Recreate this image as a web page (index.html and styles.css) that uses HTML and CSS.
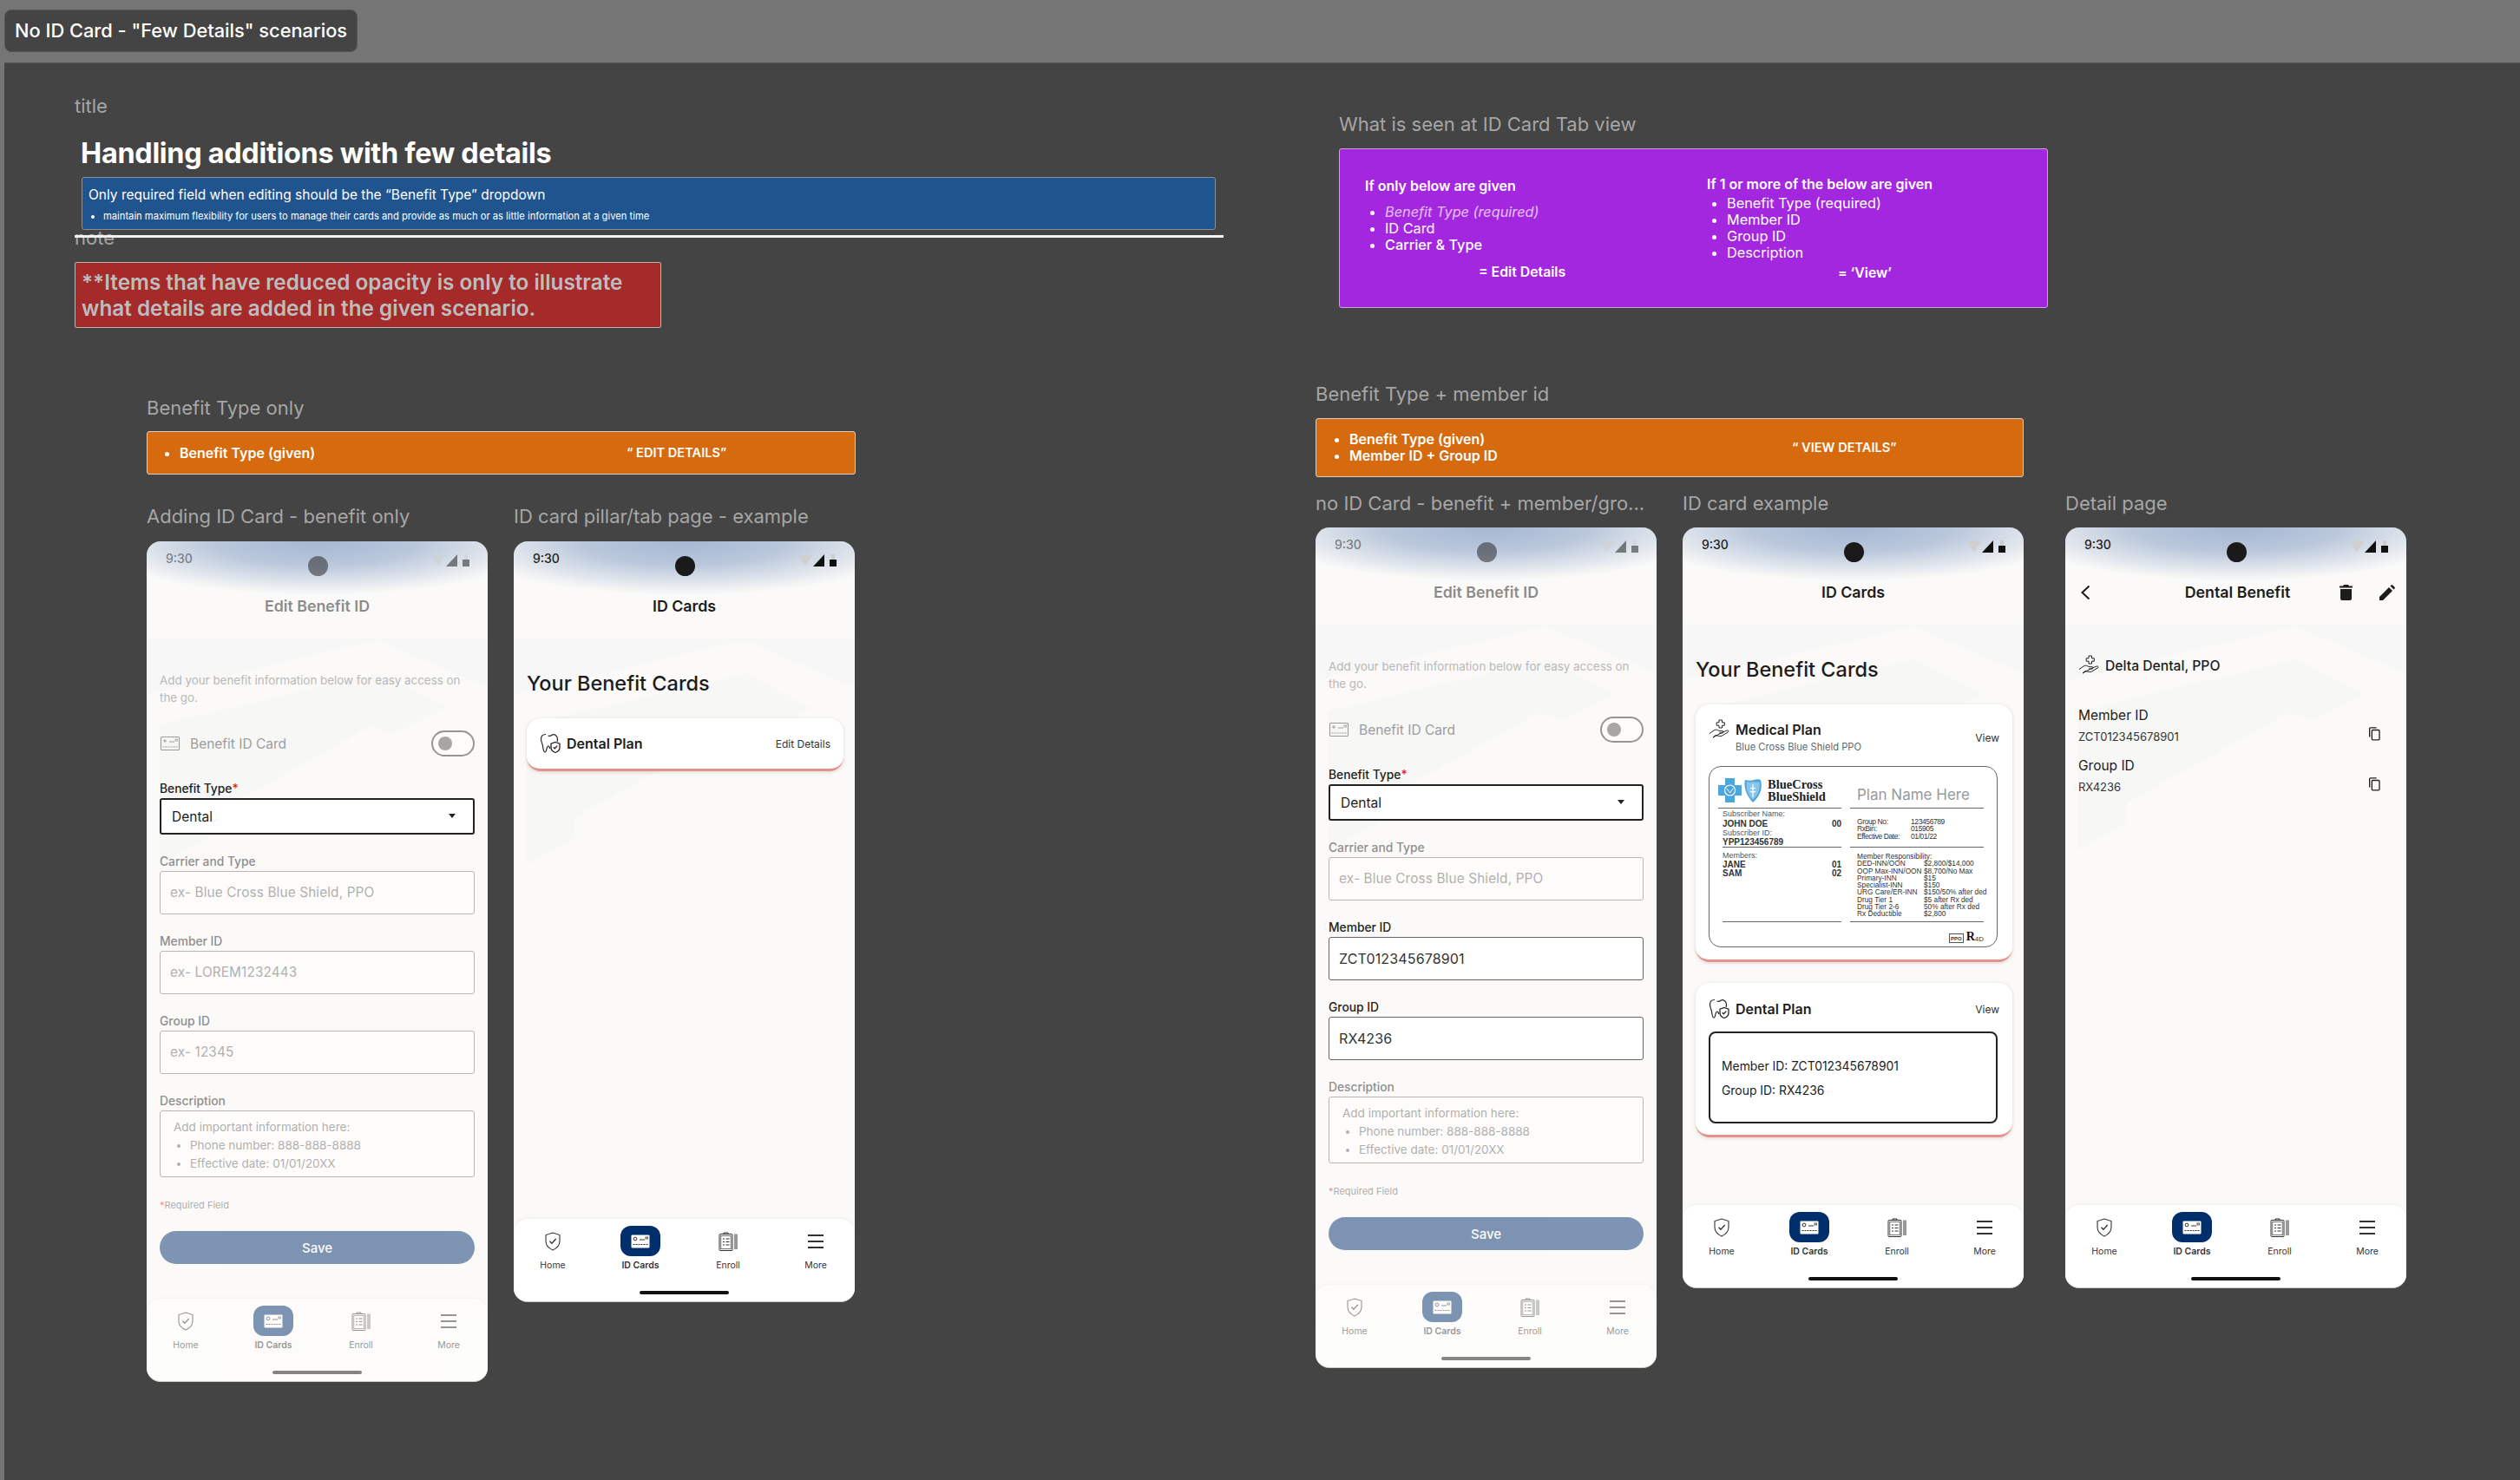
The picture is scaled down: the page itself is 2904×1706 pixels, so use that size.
FILE: index.html
```html
<!DOCTYPE html>
<html lang="en">
<head>
  <meta charset="UTF-8">
  <title>No ID Card - Few Details scenarios</title>
  <link rel="stylesheet" href="styles.css">
</head>
<body>
  <!-- shared icons -->
  <svg class="icon-defs" aria-hidden="true">
    <symbol id="i-shield" viewBox="0 0 24 24"><path d="M12 2l8 2.6v7c0 4.800-3.200 8.300-8 10.400-4.800-2.100-8-5.600-8-10.400v-7z" fill="none" stroke="currentColor" stroke-width="1.100"/><path d="M8.500 11.800l2.400 2.500 4.800-5.300" fill="none" stroke="currentColor" stroke-width="1.300"/></symbol>
    <symbol id="i-card" viewBox="0 0 24 24"><rect x="1.500" y="4.500" width="21" height="15" rx="1" fill="none" stroke="currentColor" stroke-width="1.100"/><path d="M6 7v4M4 9h4M11 10h6" fill="none" stroke="currentColor" stroke-width="1"/><path d="M3.500 16h17" fill="none" stroke="currentColor" stroke-width="1" stroke-dasharray="2 1"/><rect x="18" y="7" width="2.500" height="2" fill="none" stroke="currentColor" stroke-width=".8"/></symbol>
    <symbol id="i-card-on" viewBox="0 0 24 24"><rect x="1.500" y="4.500" width="21" height="15" rx="1" fill="#fff"/><circle cx="6" cy="9" r="1.900" fill="none" stroke="#333" stroke-width="1"/><path d="M11 10h6" fill="none" stroke="#333" stroke-width="1"/><path d="M3.500 15.500h17" fill="none" stroke="#333" stroke-width="1" stroke-dasharray="2 1"/><rect x="18" y="7" width="2.500" height="2" fill="none" stroke="#333" stroke-width=".8"/></symbol>
    <symbol id="i-clipboard" viewBox="0 0 24 24"><rect x="2" y="3.500" width="15" height="19" rx="1" fill="none" stroke="currentColor" stroke-width="1"/><rect x="3.800" y="5.300" width="11.400" height="15.400" fill="none" stroke="currentColor" stroke-width=".7"/><path d="M7 3.500V2h5v1.500M6 9h2M6 12.500h2M6 16h2M9.500 9h4M9.500 12.500h4M9.500 16h4" fill="none" stroke="currentColor" stroke-width="1"/><path d="M20 3.500v17.500M22 3.500v17.500" fill="none" stroke="currentColor" stroke-width="1"/></symbol>
    <symbol id="i-menu" viewBox="0 0 24 24"><path d="M3 5h18M3 12h18M3 19h18" fill="none" stroke="currentColor" stroke-width="1.800"/></symbol>
    <symbol id="i-tooth" viewBox="0 0 24 24"><path d="M7 1.500c-3.200 0-5.500 2-5.500 5.500 0 3.300 1.500 4.600 2 8 .4 2.900.8 7 2.500 7 2.400 0 1.400-7 3.800-7 1 0 1.600 1.400 2 3M9.500 3c1.300.5 3 .5 4.500-.8 2.600-1.400 6.500.3 6.500 4.800 0 1.200-.2 2.200-.5 3" fill="none" stroke="currentColor" stroke-width="1.200"/><path d="M18 10.500l5 1.700v4.300c0 2.900-2 4.900-5 6-3-1.100-5-3.100-5-6v-4.300z" fill="#fff" stroke="currentColor" stroke-width="1.300"/><path d="M15.700 16.200l1.600 1.600 3-3.200" fill="none" stroke="currentColor" stroke-width="1.300"/></symbol>
    <symbol id="i-hand" viewBox="0 0 24 24"><path d="M12 1h3.500v2.800h2.800v3.400h-2.800V10H12V7.200H9.200V3.800H12z" fill="none" stroke="currentColor" stroke-width="1"/><path d="M1 16.500l5-3.500c1.500-1 3-1 4.500-.3l2.500 1h3c1.300 0 1.300 2.300 0 2.300h-4M16 15l5.300-2c1.500-.5 2.200 1.200 1 2l-6.800 4c-1 .6-2 .7-3 .5l-4.500-1-3 2.500z" fill="none" stroke="currentColor" stroke-width="1"/></symbol>
    <symbol id="i-copy" viewBox="0 0 24 24"><path d="M4 18V3.500C4 2.700 4.700 2 5.500 2H16" fill="none" stroke="currentColor" stroke-width="2"/><rect x="8" y="6" width="13" height="17" rx="1.500" fill="none" stroke="currentColor" stroke-width="2"/></symbol>
    <symbol id="i-status" viewBox="0 0 44 14"><path d="M0 2c4-3 12-3 16 0l-8 11z" fill="#cfcfcf"/><path d="M30 0v14H17z" fill="#111"/><rect x="38" y="0" width="4" height="6" fill="#ccc"/><rect x="36" y="6" width="8" height="8" fill="#111"/></symbol>
    <symbol id="i-pattern" viewBox="0 0 393 440" preserveAspectRatio="xMidYMin slice"><polygon points="0,0 393,0 393,58 265,3 0,66" fill="#f7f7f7"/><polygon points="15,100 267,41 345,81 285,111 257,103 71,207 71,230 15,261" fill="#f7f7f6"/></symbol>
  </svg>

  <div class="topbar">
    <div class="section-tag">No ID Card - "Few Details" scenarios</div>
  </div>

  <div class="canvas">

    <!-- note -->
    <div class="note-block">
      <div class="frame-label">note</div>
      <div class="note-box">**Items that have reduced opacity is only to illustrate<br>what details are added in the given scenario.</div>
    </div>

    <!-- title -->
    <div class="title-block">
      <div class="frame-label title-label">title</div>
      <h1 class="page-title">Handling additions with few details</h1>
      <div class="info-box">
        <p>Only required field when editing should be the “Benefit Type” dropdown</p>
        <ul><li>maintain maximum flexibility for users to manage their cards and provide as much or as little information at a given time</li></ul>
      </div>
      <div class="title-rule"></div>
    </div>

    <!-- what is seen -->
    <div class="seen-block">
      <div class="frame-label seen-label">What is seen at ID Card Tab view</div>
      <div class="seen-box">
        <div class="seen-col seen-left">
          <h4>If only below are given</h4>
          <ul>
            <li><em>Benefit Type (required)</em></li>
            <li>ID Card</li>
            <li><b>Carrier &amp; Type</b></li>
          </ul>
          <div class="seen-result">= Edit Details</div>
        </div>
        <div class="seen-col seen-right">
          <h4>If 1 or more of the below are given</h4>
          <ul>
            <li>Benefit Type (required)</li>
            <li>Member ID</li>
            <li>Group ID</li>
            <li>Description</li>
          </ul>
          <div class="seen-result">= ‘View’</div>
        </div>
      </div>
    </div>

    <!-- 시나리오 1 -->
    <div class="scenario scenario-one">
      <div class="frame-label">Benefit Type only</div>
      <div class="banner">
        <ul><li>Benefit Type (given)</li></ul>
        <div class="banner-result">“ EDIT DETAILS”</div>
      </div>
      <div class="phones">
        <div class="phone-col">
          <div class="frame-label">Adding ID Card - benefit only</div>
          <div class="phone phone-tall">
            <svg class="phone-pattern"><use href="#i-pattern"/></svg>
            <div class="phone-top">
              <div class="status-bar faded">
                <span class="status-time">9:30</span>
                <span class="camera"></span>
                <span class="status-icons"><svg width="44" height="14"><use href="#i-status"/></svg></span>
              </div>
              <div class="phone-title faded">Edit Benefit ID</div>
            </div>
            <div class="phone-body form-body">
              <p class="form-intro faded">Add your benefit information below for easy access on the go.</p>
              <div class="toggle-row faded">
                <svg class="row-icon"><use href="#i-card"/></svg>
                <span>Benefit ID Card</span>
                <span class="toggle"></span>
              </div>
              <label class="field-label">Benefit Type<i>*</i></label>
              <div class="select-box">Dental<span class="caret"></span></div>
              <div class="field faded">
                <label class="field-label">Carrier and Type</label>
                <div class="input-box">ex- Blue Cross Blue Shield, PPO</div>
              </div>
              <div class="field faded">
                <label class="field-label">Member ID</label>
                <div class="input-box">ex- LOREM1232443</div>
              </div>
              <div class="field faded">
                <label class="field-label">Group ID</label>
                <div class="input-box">ex- 12345</div>
              </div>
              <div class="field faded">
                <label class="field-label">Description</label>
                <div class="text-box">
                  Add important information here:
                  <ul><li>Phone number: 888-888-8888</li><li>Effective date: 01/01/20XX</li></ul>
                </div>
              </div>
              <div class="required-note faded"><i>*</i>Required Field</div>
              <div class="save-btn faded">Save</div>
            </div>
            <nav class="tabbar faded">
              <div class="tabs">
                <div class="tab"><span class="tab-icon"><svg><use href="#i-shield"/></svg></span>Home</div>
                <div class="tab tab-on"><span class="tab-icon"><svg><use href="#i-card-on"/></svg></span>ID Cards</div>
                <div class="tab"><span class="tab-icon"><svg><use href="#i-clipboard"/></svg></span>Enroll</div>
                <div class="tab"><span class="tab-icon"><svg><use href="#i-menu"/></svg></span>More</div>
              </div>
              <div class="home-bar"></div>
            </nav>
          </div>
        </div>

        <div class="phone-col">
          <div class="frame-label">ID card pillar/tab page - example</div>
          <div class="phone">
            <svg class="phone-pattern"><use href="#i-pattern"/></svg>
            <div class="phone-top">
              <div class="status-bar">
                <span class="status-time">9:30</span>
                <span class="camera"></span>
                <span class="status-icons"><svg width="44" height="14"><use href="#i-status"/></svg></span>
              </div>
              <div class="phone-title">ID Cards</div>
            </div>
            <div class="phone-body cards-body">
              <h2 class="cards-heading">Your Benefit Cards</h2>
              <div class="plan-card plan-short">
                <div class="plan-head">
                  <svg class="plan-icon"><use href="#i-tooth"/></svg>
                  <span class="plan-name">Dental Plan</span>
                  <span class="plan-link">Edit Details</span>
                </div>
              </div>
            </div>
            <nav class="tabbar">
              <div class="tabs">
                <div class="tab"><span class="tab-icon"><svg><use href="#i-shield"/></svg></span>Home</div>
                <div class="tab tab-on"><span class="tab-icon"><svg><use href="#i-card-on"/></svg></span>ID Cards</div>
                <div class="tab"><span class="tab-icon"><svg><use href="#i-clipboard"/></svg></span>Enroll</div>
                <div class="tab"><span class="tab-icon"><svg><use href="#i-menu"/></svg></span>More</div>
              </div>
              <div class="home-bar"></div>
            </nav>
          </div>
        </div>
      </div>
    </div>

    <!-- 시나리오 2 -->
    <div class="scenario scenario-two">
      <div class="frame-label">Benefit Type + member id</div>
      <div class="banner banner-tall">
        <ul><li>Benefit Type (given)</li><li>Member ID + Group ID</li></ul>
        <div class="banner-result">“ VIEW DETAILS”</div>
      </div>
      <div class="phones">
        <div class="phone-col">
          <div class="frame-label">no ID Card - benefit + member/gro...</div>
          <div class="phone phone-tall">
            <svg class="phone-pattern"><use href="#i-pattern"/></svg>
            <div class="phone-top">
              <div class="status-bar faded">
                <span class="status-time">9:30</span>
                <span class="camera"></span>
                <span class="status-icons"><svg width="44" height="14"><use href="#i-status"/></svg></span>
              </div>
              <div class="phone-title faded">Edit Benefit ID</div>
            </div>
            <div class="phone-body form-body">
              <p class="form-intro faded">Add your benefit information below for easy access on the go.</p>
              <div class="toggle-row faded">
                <svg class="row-icon"><use href="#i-card"/></svg>
                <span>Benefit ID Card</span>
                <span class="toggle"></span>
              </div>
              <label class="field-label">Benefit Type<i>*</i></label>
              <div class="select-box">Dental<span class="caret"></span></div>
              <div class="field faded">
                <label class="field-label">Carrier and Type</label>
                <div class="input-box">ex- Blue Cross Blue Shield, PPO</div>
              </div>
              <div class="field">
                <label class="field-label">Member ID</label>
                <div class="input-box input-filled">ZCT012345678901</div>
              </div>
              <div class="field">
                <label class="field-label">Group ID</label>
                <div class="input-box input-filled">RX4236</div>
              </div>
              <div class="field faded">
                <label class="field-label">Description</label>
                <div class="text-box">
                  Add important information here:
                  <ul><li>Phone number: 888-888-8888</li><li>Effective date: 01/01/20XX</li></ul>
                </div>
              </div>
              <div class="required-note faded"><i>*</i>Required Field</div>
              <div class="save-btn faded">Save</div>
            </div>
            <nav class="tabbar faded">
              <div class="tabs">
                <div class="tab"><span class="tab-icon"><svg><use href="#i-shield"/></svg></span>Home</div>
                <div class="tab tab-on"><span class="tab-icon"><svg><use href="#i-card-on"/></svg></span>ID Cards</div>
                <div class="tab"><span class="tab-icon"><svg><use href="#i-clipboard"/></svg></span>Enroll</div>
                <div class="tab"><span class="tab-icon"><svg><use href="#i-menu"/></svg></span>More</div>
              </div>
              <div class="home-bar"></div>
            </nav>
          </div>
        </div>

        <div class="phone-col">
          <div class="frame-label">ID card example</div>
          <div class="phone">
            <svg class="phone-pattern"><use href="#i-pattern"/></svg>
            <div class="phone-top">
              <div class="status-bar">
                <span class="status-time">9:30</span>
                <span class="camera"></span>
                <span class="status-icons"><svg width="44" height="14"><use href="#i-status"/></svg></span>
              </div>
              <div class="phone-title">ID Cards</div>
            </div>
            <div class="phone-body cards-body">
              <h2 class="cards-heading">Your Benefit Cards</h2>

              <div class="plan-card">
                <div class="plan-head plan-head-two">
                  <svg class="plan-icon"><use href="#i-hand"/></svg>
                  <div class="plan-titles">
                    <span class="plan-name">Medical Plan</span>
                    <span class="plan-sub">Blue Cross Blue Shield PPO</span>
                  </div>
                  <span class="plan-link">View</span>
                </div>
                <div class="id-card">
                  <div class="id-cell id-logo">
                    <svg width="54" height="28" viewBox="0 0 54 28"><path d="M8 0h11v8h8v12h-8v8H8v-8H0V8h8z" fill="#4aa6dc"/><circle cx="13.500" cy="14" r="6" fill="none" stroke="#fff" stroke-width="1.200"/><path d="M10 12l3.500 5 3.500-5" fill="none" stroke="#fff" stroke-width="1"/><path d="M31 2c3 1 8 1 10 0 3-1 6-1 8 0 2 8 1 17-9 26C32 19 29 10 31 2z" fill="#4aa6dc"/><path d="M33 4c3 1 6 1 7.500 0 2 1 5 1 7 0 1 7 0 14-7.500 21C33 18 32 11 33 4z" fill="#fff" fill-opacity=".35"/><path d="M40 7v15M37 11c2 1.500 4 1.500 6 0M37 15c2 1.500 4 1.500 6 0" fill="none" stroke="#fff" stroke-width="1.200"/></svg>
                    <span class="bcbs-name">BlueCross<br>BlueShield</span>
                  </div>
                  <div class="id-cell id-plan">Plan Name Here</div>

                  <div class="id-cell id-subscriber">
                    <div class="id-small">Subscriber Name:</div>
                    <div class="id-row"><b>JOHN DOE</b><b class="id-num">00</b></div>
                    <div class="id-small">Subscriber ID:</div>
                    <div class="id-row"><b>YPP123456789</b></div>
                  </div>
                  <div class="id-cell id-group">
                    <span>Group No:</span><span>123456789</span>
                    <span>RxBin:</span><span>015905</span>
                    <span>Effective Date:</span><span>01/01/22</span>
                  </div>

                  <div class="id-cell id-members">
                    <div class="id-small">Members:</div>
                    <div class="id-row id-tight"><b>JANE</b><b class="id-num">01</b></div>
                    <div class="id-row id-tight"><b>SAM</b><b class="id-num">02</b></div>
                  </div>
                  <div class="id-cell id-costs">
                    <div class="id-costs-head">Member Responsibility:</div>
                    <span>DED-INN/OON</span><span>$2,800/$14,000</span>
                    <span>OOP Max-INN/OON</span><span>$8,700/No Max</span>
                    <span>Primary-INN</span><span>$15</span>
                    <span>Specialist-INN</span><span>$150</span>
                    <span>URG Care/ER-INN</span><span>$150/50% after ded</span>
                    <span>Drug Tier 1</span><span>$5 after Rx ded</span>
                    <span>Drug Tier 2-6</span><span>50% after Rx ded</span>
                    <span>Rx Deductible</span><span>$2,800</span>
                  </div>

                  <div class="id-foot"><span class="ppo-mark">PPO</span><span class="rx-mark">R</span><span class="rx-sub">4D</span></div>
                </div>
              </div>

              <div class="plan-card plan-dental">
                <div class="plan-head">
                  <svg class="plan-icon"><use href="#i-tooth"/></svg>
                  <span class="plan-name">Dental Plan</span>
                  <span class="plan-link">View</span>
                </div>
                <div class="id-text-box">
                  <p>Member ID: ZCT012345678901</p>
                  <p>Group ID: RX4236</p>
                </div>
              </div>
            </div>
            <nav class="tabbar">
              <div class="tabs">
                <div class="tab"><span class="tab-icon"><svg><use href="#i-shield"/></svg></span>Home</div>
                <div class="tab tab-on"><span class="tab-icon"><svg><use href="#i-card-on"/></svg></span>ID Cards</div>
                <div class="tab"><span class="tab-icon"><svg><use href="#i-clipboard"/></svg></span>Enroll</div>
                <div class="tab"><span class="tab-icon"><svg><use href="#i-menu"/></svg></span>More</div>
              </div>
              <div class="home-bar"></div>
            </nav>
          </div>
        </div>

        <div class="phone-col detail-col">
          <div class="frame-label">Detail page</div>
          <div class="phone">
            <svg class="phone-pattern"><use href="#i-pattern"/></svg>
            <div class="phone-top">
              <div class="status-bar">
                <span class="status-time">9:30</span>
                <span class="camera"></span>
                <span class="status-icons"><svg width="44" height="14"><use href="#i-status"/></svg></span>
              </div>
              <div class="phone-title detail-title">
                <svg class="back-icon" width="12" height="18" viewBox="0 0 12 18"><path d="M10.500 1.500L2.500 9l8 7.500" fill="none" stroke="#1c1c1c" stroke-width="2"/></svg>
                <span>Dental Benefit</span>
                <span class="detail-actions">
                  <svg width="15" height="18" viewBox="0 0 15 18"><path d="M5 0h5l1 1.500h4v2H0v-2h4zM1 5h13v11c0 1-.8 2-2 2H3c-1.200 0-2-1-2-2z" fill="#1c1c1c"/></svg>
                  <svg width="18" height="18" viewBox="0 0 18 18"><path d="M0 18v-4L11 3l4 4L4 18zM12.500 1.500l1-1c.5-.5 1.200-.5 1.700 0l2.300 2.300c.5.500.5 1.200 0 1.700l-1 1z" fill="#1c1c1c"/></svg>
                </span>
              </div>
            </div>
            <div class="phone-body detail-body">
              <div class="detail-plan"><svg class="plan-icon"><use href="#i-hand"/></svg>Delta Dental, PPO</div>
              <div class="detail-row">
                <div><div class="detail-name">Member ID</div><div class="detail-value">ZCT012345678901</div></div>
                <svg class="copy-icon"><use href="#i-copy"/></svg>
              </div>
              <div class="detail-row">
                <div><div class="detail-name">Group ID</div><div class="detail-value">RX4236</div></div>
                <svg class="copy-icon"><use href="#i-copy"/></svg>
              </div>
            </div>
            <nav class="tabbar">
              <div class="tabs">
                <div class="tab"><span class="tab-icon"><svg><use href="#i-shield"/></svg></span>Home</div>
                <div class="tab tab-on"><span class="tab-icon"><svg><use href="#i-card-on"/></svg></span>ID Cards</div>
                <div class="tab"><span class="tab-icon"><svg><use href="#i-clipboard"/></svg></span>Enroll</div>
                <div class="tab"><span class="tab-icon"><svg><use href="#i-menu"/></svg></span>More</div>
              </div>
              <div class="home-bar"></div>
            </nav>
          </div>
        </div>
      </div>
    </div>

  </div>
</body>
</html>
```

FILE: styles.css
```css
* {
  box-sizing: border-box;
}

html, body {
  height: 100%;
}

body {
  margin: 0;
  font-family: Inter, "Liberation Sans", sans-serif;
  background-color: #757575;
  color: #1c1c1c;
  display: flex;
  flex-direction: column;
  overflow: hidden;
}

ul {
  margin: 0;
  padding: 0;
}

p {
  margin: 0;
}

.icon-defs {
  position: absolute;
  width: 0;
  height: 0;
}

/* 상단 바 */
.topbar {
  height: 72px;
  flex-shrink: 0;
  padding: 11px 0 0 5px;
}

.section-tag {
  width: 407px;
  height: 49px;
  line-height: 47px;
  padding-left: 11px;
  background-color: #444;
  border: 1px solid #555;
  border-radius: 8px;
  color: #fff;
  font-size: 21.800px;
  font-weight: 500;
  white-space: nowrap;
}

/* 캔버스: 프레임은 자유 배치 */
.canvas {
  flex: 1;
  margin-left: 5px;
  position: relative;
  background-color: #444;
  border-top: 1px solid #555;
}

.frame-label {
  height: 28px;
  line-height: 28px;
  font-size: 22px;
  color: #a6a6a6;
  white-space: nowrap;
}

/* 타이틀 */
.title-block {
  position: absolute;
  left: 81px;
  top: 35px;
  width: 1324px;
  padding-left: 8px;
  z-index: 1;
}

.title-label {
  margin-left: -8px;
}

.page-title {
  margin: 21px 0 7px -1px;
  height: 40px;
  line-height: 40px;
  font-size: 32.400px;
  font-weight: 700;
  color: #fff;
  letter-spacing: -0.3px;
}

.info-box {
  width: 1307px;
  height: 61px;
  padding: 10px 7px;
  background-color: #20548f;
  border: 1px solid #8a8f96;
  border-radius: 3px;
  color: #fff;
}

.info-box p {
  font-size: 15.500px;
  line-height: 19px;
}

.info-box ul {
  margin-top: 8px;
  padding-left: 17px;
  font-size: 11.200px;
  line-height: 15px;
}

.title-rule {
  margin: 6px 0 0 -8px;
  height: 3px;
  background-color: #f2f2f2;
}

/* 노트 */
.note-block {
  position: absolute;
  left: 81px;
  top: 187px;
  width: 676px;
}

.note-box {
  margin-top: 14px;
  height: 76px;
  padding: 7px 7px;
  background-color: #a52a2a;
  border: 1px solid #b5b5b5;
  border-radius: 2px;
  color: #bdbdbd;
  font-size: 24.300px;
  font-weight: 600;
  line-height: 30px;
  white-space: nowrap;
}

/* ID 카드 탭 뷰 설명 */
.seen-block {
  position: absolute;
  left: 1538px;
  top: 56px;
  width: 817px;
}

.seen-label {
  margin-bottom: 14px;
}

.seen-box {
  height: 184px;
  display: flex;
  padding: 32px 0 0 29px;
  background-color: #a427e0;
  border: 1px solid #c4a9d4;
  border-radius: 3px;
  color: #fff;
}

.seen-col h4 {
  margin: 0;
  font-size: 16px;
  line-height: 20px;
  font-weight: 600;
}

.seen-col ul {
  padding-left: 23px;
  font-size: 16.300px;
  line-height: 19px;
}

.seen-col em {
  opacity: .7;
}

.seen-col b {
  font-weight: 500;
}

.seen-result {
  font-size: 15.800px;
  line-height: 19px;
  font-weight: 600;
}

.seen-left {
  width: 394px;
}

.seen-left ul {
  margin-top: 11px;
}

.seen-left .seen-result {
  margin: 12px 0 0 131px;
}

.seen-right {
  margin-top: -2px;
}

.seen-right ul {
  margin-top: 3px;
}

.seen-right .seen-result {
  margin: 4px 0 0 151px;
}

/* 시나리오 */
.scenario {
  position: absolute;
}

.scenario-one {
  left: 164px;
  top: 383px;
  width: 818px;
}

.scenario-two {
  left: 1511px;
  top: 367px;
  width: 1263px;
}

.banner {
  width: 817px;
  height: 50px;
  margin-top: 13px;
  display: grid;
  grid-template-columns: 552px 1fr;
  align-items: center;
  background-color: #d56b0e;
  border: 1px solid #d9d0c8;
  border-radius: 3px;
  color: #fff;
  font-size: 16px;
  font-weight: 600;
}

.banner ul {
  padding-left: 37px;
  line-height: 19px;
}

.banner-result {
  font-size: 14.600px;
}

.banner-tall {
  width: 816px;
  height: 68px;
  margin-top: 14px;
  grid-template-columns: 548px 1fr;
}

.banner-tall ul {
  padding-left: 38px;
}

.phones {
  display: flex;
  gap: 30px;
  margin-top: 34px;
}

.scenario-two .phones {
  margin-top: 16px;
}

.phone-col {
  width: 393px;
}

.phone-col .frame-label {
  margin-bottom: 15px;
}

.scenario-two .phone-col .frame-label {
  margin-bottom: 14px;
}

.detail-col {
  margin-left: 18px;
}

/* 폰 프레임 */
.phone {
  position: relative;
  width: 393px;
  height: 877px;
  display: flex;
  flex-direction: column;
  background-color: #fbfaf8;
  border-radius: 16px;
  border-bottom: 1px solid #ccc;
  overflow: hidden;
}

.phone-tall {
  height: 969px;
}

.phone-pattern {
  position: absolute;
  left: 0;
  top: 111px;
  width: 393px;
  height: 440px;
}

.phone-top {
  position: relative;
  height: 111px;
  flex-shrink: 0;
  background: radial-gradient(ellipse 265px 62px at 50% 0, #a5b7d2 0%, rgba(165, 183, 210, .75) 45%, rgba(251, 250, 248, 0) 100%);
}

.status-bar {
  height: 56px;
  display: grid;
  grid-template-columns: 1fr auto 1fr;
  padding: 0 21px 0 22px;
}

.status-time {
  margin-top: 11px;
  font-size: 14px;
  line-height: 17px;
  font-weight: 500;
}

.camera {
  margin-top: 17px;
  width: 23px;
  height: 23px;
  border-radius: 50%;
  background-color: #1a1a1a;
}

.status-icons {
  justify-self: end;
  margin-top: 13px;
}

.phone-title {
  height: 38px;
  line-height: 38px;
  text-align: center;
  font-size: 17.800px;
  font-weight: 600;
}

.detail-title {
  display: grid;
  grid-template-columns: 1fr auto 1fr;
  align-items: center;
  padding: 0 13px 0 17px;
}

.back-icon {
  display: block;
}

.detail-actions {
  display: flex;
  justify-content: flex-end;
  gap: 31px;
}

.detail-actions svg {
  display: block;
}

.phone-body {
  position: relative;
  flex: 1;
  min-height: 0;
}

.faded {
  opacity: .5;
}

/* 입력 폼 */
.form-body {
  padding: 39px 15px 0;
}

.form-intro {
  font-size: 13.400px;
  line-height: 20px;
  color: #777;
}

.toggle-row {
  height: 30px;
  margin: 28px 0 29px;
  display: flex;
  align-items: center;
  font-size: 15.500px;
  color: #444;
}

.row-icon {
  width: 24px;
  height: 24px;
  margin-right: 11px;
  color: #444;
}

.toggle {
  position: relative;
  margin-left: auto;
  width: 50px;
  height: 30px;
  border: 2px solid #333;
  border-radius: 15px;
  background-color: #fff;
}

.toggle::after {
  content: '';
  position: absolute;
  left: 6px;
  top: 5px;
  width: 16px;
  height: 16px;
  border-radius: 50%;
  background-color: #555;
}

.field-label {
  display: block;
  height: 16px;
  margin-bottom: 3px;
  line-height: 16px;
  font-size: 13.800px;
  font-weight: 500;
  color: #222;
}

.field-label i {
  font-style: normal;
  color: #e0202a;
}

.select-box {
  position: relative;
  height: 42px;
  line-height: 39px;
  padding-left: 12px;
  background-color: #fff;
  border: 2px solid #222;
  border-radius: 3px;
  font-size: 15.500px;
}

.caret {
  position: absolute;
  right: 20px;
  top: 16px;
  border-left: 4.500px solid transparent;
  border-right: 4.500px solid transparent;
  border-top: 5px solid #222;
}

.field {
  margin-top: 23px;
}

.input-box {
  height: 50px;
  line-height: 48px;
  padding-left: 11px;
  background-color: #fff;
  border: 1.500px solid #777;
  border-radius: 3px;
  font-size: 15.300px;
  letter-spacing: .15px;
  color: #666;
}

.input-filled {
  border-color: #666;
  color: #333;
  font-size: 16px;
}

.text-box {
  height: 77px;
  padding: 8px 15px;
  background-color: #fff;
  border: 1.500px solid #777;
  border-radius: 3px;
  font-size: 13.500px;
  line-height: 21px;
  color: #666;
}

.text-box ul {
  padding-left: 19px;
}

.required-note {
  margin-top: 24px;
  font-size: 11px;
  line-height: 16px;
  color: #666;
}

.required-note i {
  font-style: normal;
  color: #e0202a;
}

.save-btn {
  height: 38px;
  margin-top: 22px;
  line-height: 39px;
  text-align: center;
  background-color: #002f6c;
  border-radius: 19px;
  color: #fff;
  font-size: 15px;
  font-weight: 500;
}

/* 카드 목록 */
.cards-body {
  padding: 0 15px;
}

.cards-heading {
  margin: 35px 0 22px;
  height: 36px;
  line-height: 36px;
  font-size: 23.500px;
  font-weight: 500;
}

.plan-card {
  width: 365px;
  height: 297px;
  padding: 17px 15px 0;
  background-color: #fff;
  border-radius: 16px;
  border-bottom: 3px solid #e8918a;
  box-shadow: 0 1px 4px rgba(0, 0, 0, .14);
}

.plan-short {
  height: 61px;
  padding-top: 16px;
}

.plan-dental {
  height: 178px;
  margin-top: 24px;
}

.plan-head {
  display: flex;
  align-items: center;
  height: 26px;
}

.plan-head-two {
  height: 42px;
  align-items: flex-start;
}

.plan-head-two .plan-titles {
  padding-top: 2px;
}

.plan-icon {
  width: 24px;
  height: 24px;
  margin-right: 7px;
  flex-shrink: 0;
  color: #222;
}

.plan-name {
  display: block;
  font-size: 16px;
  line-height: 20px;
  font-weight: 600;
}

.plan-sub {
  display: block;
  margin-top: 2px;
  font-size: 11.200px;
  line-height: 16px;
  color: #666;
}

.plan-link {
  margin-left: auto;
  font-size: 12px;
  color: #333;
}

.plan-head-two .plan-link {
  margin-top: 14px;
}

/* 의료 ID 카드 */
.id-card {
  margin-top: 12px;
  width: 333px;
  height: 209px;
  display: grid;
  grid-template-columns: 137px 154px;
  grid-template-rows: 48px 45px 86px 1fr;
  column-gap: 10px;
  padding: 0 15px;
  background-color: #fff;
  border: 1px solid #666;
  border-radius: 14px;
  font-family: "Liberation Sans", Arial, sans-serif;
  color: #333;
}

.id-cell {
  border-bottom: 1px solid #666;
}

.id-logo {
  display: flex;
  align-items: flex-end;
  margin-left: -5px;
  padding-bottom: 6px;
  gap: 3px;
  white-space: nowrap;
}

.bcbs-name {
  font-family: "Liberation Serif", serif;
  font-size: 14.500px;
  line-height: 13.500px;
  font-weight: 700;
  color: #222;
}

.id-plan {
  padding: 21px 0 0 8px;
  font-family: Inter, sans-serif;
  font-size: 17px;
  line-height: 22px;
  color: #999;
  white-space: nowrap;
}

.id-small {
  font-size: 9px;
  line-height: 10.500px;
  color: #555;
}

.id-row {
  display: flex;
  justify-content: space-between;
  font-size: 10px;
  line-height: 11px;
}

.id-tight {
  line-height: 10px;
}

.id-subscriber {
  padding-top: 1px;
}

.id-group {
  display: grid;
  grid-template-columns: 62px 1fr;
  align-content: start;
  padding: 11px 0 0 8px;
  font-size: 8.500px;
  line-height: 8.300px;
  letter-spacing: -.4px;
  white-space: nowrap;
}

.id-members {
  padding-top: 4px;
}

.id-costs {
  display: grid;
  grid-template-columns: 77px 1fr;
  align-content: start;
  padding: 6px 0 0 8px;
  font-size: 8.300px;
  line-height: 8.300px;
  white-space: nowrap;
}

.id-costs-head {
  grid-column: 1 / 3;
}

.id-foot {
  grid-column: 2;
  display: flex;
  justify-content: flex-end;
  align-items: flex-end;
  padding-top: 5px;
  height: 24px;
}

.ppo-mark {
  padding: 1px 1px 0;
  border: 1px solid #555;
  font-size: 6px;
  font-weight: 700;
  line-height: 8px;
}

.rx-mark {
  margin-left: 3px;
  font-family: "Liberation Serif", serif;
  font-size: 14px;
  line-height: 14px;
  font-weight: 700;
  color: #111;
}

.rx-sub {
  font-size: 8px;
  line-height: 8px;
}

.id-text-box {
  margin-top: 13px;
  width: 333px;
  height: 106px;
  padding: 24px 13px 0;
  border: 2px solid #222;
  border-radius: 8px;
  font-size: 13.900px;
  line-height: 28px;
}

/* 상세 페이지 */
.detail-body {
  padding: 35px 15px 0;
}

.detail-plan {
  display: flex;
  align-items: center;
  height: 26px;
  font-size: 15.700px;
  font-weight: 500;
}

.detail-row {
  display: flex;
  justify-content: space-between;
  align-items: flex-end;
  padding-right: 14px;
  height: 48px;
  margin-top: 10px;
}

.detail-plan + .detail-row {
  margin-top: 33px;
}

.detail-name {
  font-size: 15.500px;
  line-height: 24px;
}

.detail-value {
  font-size: 13px;
  line-height: 24px;
  color: #333;
}

.copy-icon {
  width: 16px;
  height: 17px;
  margin-bottom: 7px;
  color: #222;
}

/* 하단 탭 */
.tabbar {
  position: relative;
  height: 95px;
  flex-shrink: 0;
  display: flex;
  flex-direction: column;
  background-color: #fff;
  border-radius: 16px 16px 0 0;
  box-shadow: 0 -1px 3px rgba(0, 0, 0, .05);
}

.tabs {
  display: flex;
  justify-content: space-between;
  padding-top: 8px;
}

.tab {
  width: 90px;
  display: flex;
  flex-direction: column;
  align-items: center;
  font-size: 10.500px;
  line-height: 14px;
  color: #333;
}

.tab-icon {
  width: 46px;
  height: 35px;
  margin-bottom: 4px;
  border-radius: 12px;
  display: flex;
  align-items: center;
  justify-content: center;
}

.tab-icon svg {
  width: 24px;
  height: 24px;
  color: #333;
}

.tab-on {
  font-weight: 600;
}

.tab-on .tab-icon {
  background-color: #002f6c;
}

.home-bar {
  width: 103px;
  height: 4px;
  margin: auto auto 8px;
  border-radius: 2px;
  background-color: #111;
}
```
